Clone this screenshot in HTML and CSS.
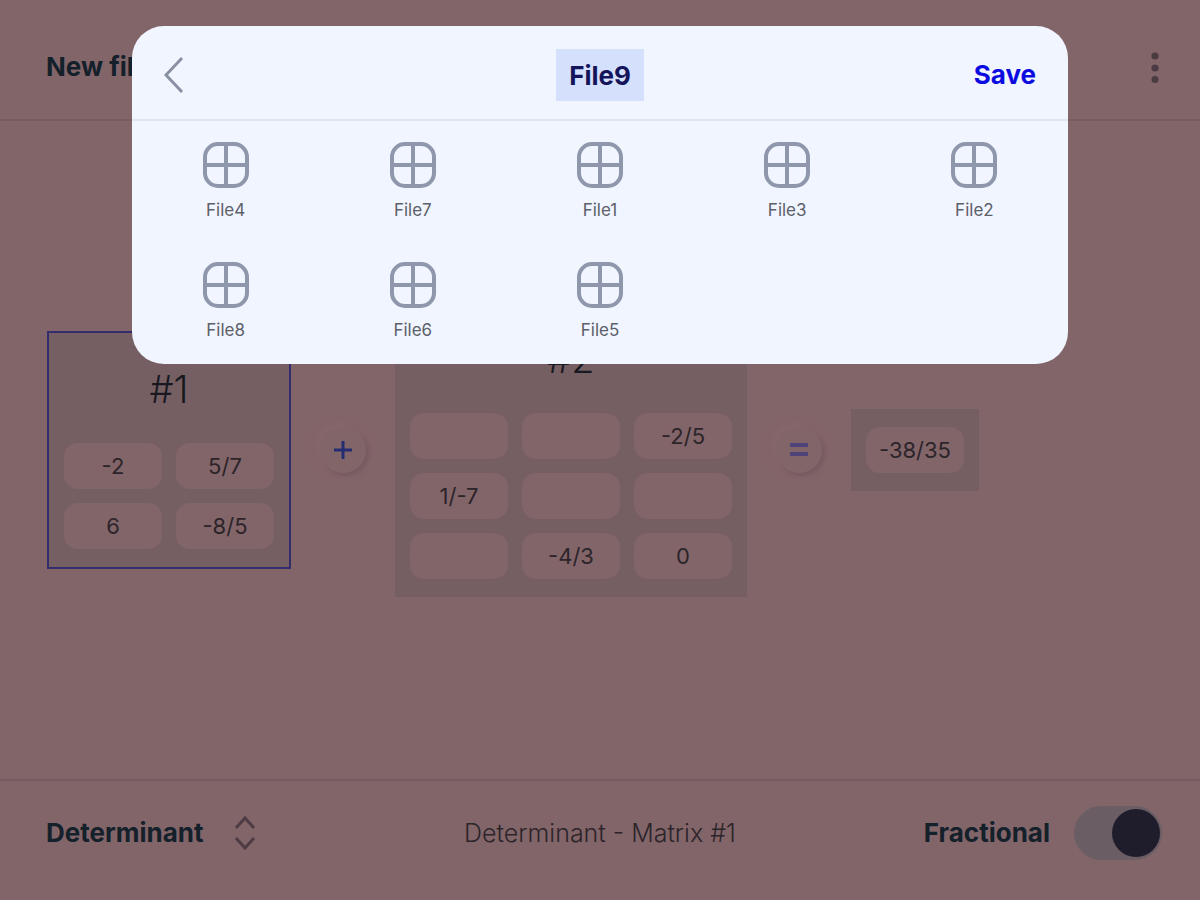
FILE: index.html
```html
<!DOCTYPE html>
<html lang="en">
<head>
<meta charset="utf-8">
<meta name="viewport" content="width=device-width, initial-scale=1">
<title>New file</title>
<link rel="stylesheet" href="styles.css">
</head>
<body>
<svg class="defs" aria-hidden="true">
  <symbol id="matrix-icon" viewBox="0 0 46 46">
    <rect x="2" y="2" width="42" height="42" rx="13"/>
    <path d="M23 2v42M2 23h42"/>
  </symbol>
</svg>
<div class="app">
  <header class="topbar">
    <h1 class="strong">New file</h1>
    <button class="icon-button" aria-label="More options">
      <svg class="dots" width="10" height="32" viewBox="0 0 10 32"><circle cx="5" cy="5" r="3.6"/><circle cx="5" cy="17" r="3.6"/><circle cx="5" cy="28.500" r="3.500"/></svg>
    </button>
  </header>

  <main class="workspace">
    <section class="matrix selected" aria-label="Matrix #1">
      <h2 class="matrix-title">#1</h2>
      <div class="cells two">
        <input class="cell" aria-label="Row 1, column 1" value="-2">
        <input class="cell" aria-label="Row 1, column 2" value="5/7">
        <input class="cell" aria-label="Row 2, column 1" value="6">
        <input class="cell" aria-label="Row 2, column 2" value="-8/5">
      </div>
    </section>
    <div class="operator">
      <button class="knob" aria-label="Add">
        <svg width="18" height="18" viewBox="0 0 18 18"><path d="M9 0v18M0 9h18"/></svg>
      </button>
    </div>
    <section class="matrix" aria-label="Matrix #2">
      <h2 class="matrix-title">#2</h2>
      <div class="cells three">
        <input class="cell" aria-label="Row 1, column 1" value="">
        <input class="cell" aria-label="Row 1, column 2" value="">
        <input class="cell" aria-label="Row 1, column 3" value="-2/5">
        <input class="cell" aria-label="Row 2, column 1" value="1/-7">
        <input class="cell" aria-label="Row 2, column 2" value="">
        <input class="cell" aria-label="Row 2, column 3" value="">
        <input class="cell" aria-label="Row 3, column 1" value="">
        <input class="cell" aria-label="Row 3, column 2" value="-4/3">
        <input class="cell" aria-label="Row 3, column 3" value="0">
      </div>
    </section>
    <div class="operator">
      <button class="knob equals" aria-label="Equals">
        <svg width="18" height="18" viewBox="0 0 18 18"><path d="M0 4h18M0 13h18"/></svg>
      </button>
    </div>
    <section class="matrix" aria-label="Result">
      <output class="cell result">-38/35</output>
    </section>
  </main>

  <footer class="bottombar">
    <div class="picker">
      <select class="strong" aria-label="Operation"><option>Determinant</option></select>
      <svg class="chevrons" width="22" height="34" viewBox="0 0 22 34"><path d="M2 12l9-10 9 10M2 22l9 10 9-10"/></svg>
    </div>
    <p class="status">Determinant - Matrix #1</p>
    <label class="mode strong">Fractional<input class="switch" type="checkbox" role="switch" checked></label>
  </footer>

  <section class="dialog" role="dialog" aria-label="Save file">
    <div class="dialog-bar">
      <button class="icon-button" aria-label="Back">
        <svg class="back" width="22" height="38" viewBox="0 0 22 38"><path d="M18 2L2 19l16 17"/></svg>
      </button>
      <input class="filename" aria-label="File name" value="File9">
      <button class="save">Save</button>
    </div>
    <div class="files">
      <button class="file"><svg class="file-icon"><use href="#matrix-icon"/></svg>File4</button>
      <button class="file"><svg class="file-icon"><use href="#matrix-icon"/></svg>File7</button>
      <button class="file"><svg class="file-icon"><use href="#matrix-icon"/></svg>File1</button>
      <button class="file"><svg class="file-icon"><use href="#matrix-icon"/></svg>File3</button>
      <button class="file"><svg class="file-icon"><use href="#matrix-icon"/></svg>File2</button>
      <button class="file"><svg class="file-icon"><use href="#matrix-icon"/></svg>File8</button>
      <button class="file"><svg class="file-icon"><use href="#matrix-icon"/></svg>File6</button>
      <button class="file"><svg class="file-icon"><use href="#matrix-icon"/></svg>File5</button>
    </div>
  </section>
</div>
</body>
</html>
```
FILE: styles.css
```css
* { box-sizing: border-box; }

body {
  margin: 0;
  font-family: Inter, "Open Sans", sans-serif;
  background: #826569;
  color: #2c2429;
}

h1, h2, p { margin: 0; }

button, input, select {
  margin: 0;
  padding: 0;
  border: 0;
  background: none;
  font: inherit;
  color: inherit;
}

svg {
  display: block;
  fill: none;
}

.defs {
  position: absolute;
  width: 0;
  height: 0;
}

.app {
  position: relative;
  display: flex;
  flex-direction: column;
  min-height: 100vh;
}

.strong {
  font-size: 26px;
  line-height: 32px;
  font-weight: 700;
  color: #14202a;
}

.topbar {
  display: flex;
  align-items: center;
  justify-content: space-between;
  padding: 51px 40px 36px 46px;
  border-bottom: 2px solid #765b60;
}

.icon-button {
  display: flex;
  justify-content: center;
}

.dots { fill: #4b3b43; }

.workspace {
  flex: 1;
  display: flex;
  align-items: center;
  padding: 0 47px;
}

.matrix {
  padding: 18px 15px;
  background: #765f63;
}

.selected { border: 2px solid #342c6c; }

.matrix-title {
  height: 92px;
  padding-top: 14px;
  font-size: 38px;
  line-height: 48px;
  font-weight: 300;
  text-align: center;
  color: #17191f;
}

.cells {
  display: grid;
  gap: 14px;
}

.two { grid-template-columns: repeat(2, 98px); }
.three { grid-template-columns: repeat(3, 98px); }

.cell {
  width: 98px;
  height: 46px;
  border-radius: 14px;
  background: #826569;
  font-size: 22px;
  line-height: 46px;
  text-align: center;
}

.result { display: block; }

.operator {
  flex: 0 0 104px;
  display: flex;
  justify-content: center;
}

.knob {
  display: grid;
  place-items: center;
  width: 46px;
  height: 46px;
  border-radius: 50%;
  box-shadow: 3px 3px 4px #755a5f, -3px -3px 6px #86696c;
  background: #826569;
  stroke: #242d72;
  stroke-width: 3;
}

.equals {
  stroke: #50437a;
  stroke-width: 4;
}

.bottombar {
  display: grid;
  grid-template-columns: 1fr auto 1fr;
  align-items: center;
  padding: 25px 38px 40px;
  border-top: 2px solid #765b60;
}

.picker {
  justify-self: start;
  display: flex;
  align-items: center;
  gap: 30px;
  padding-left: 8px;
}

.picker select { appearance: none; }

.chevrons {
  stroke: #4f3b43;
  stroke-width: 3;
}

.status {
  font-size: 25px;
  line-height: 32px;
  font-weight: 300;
}

.mode {
  justify-self: end;
  display: flex;
  align-items: center;
  gap: 24px;
}

.switch {
  appearance: none;
  display: flex;
  align-items: center;
  justify-content: flex-end;
  width: 88px;
  height: 54px;
  padding: 2px;
  border-radius: 27px;
  background: #6a5d64;
}

.switch::before {
  content: "";
  width: 48px;
  height: 48px;
  border-radius: 50%;
  background: #1f1c2c;
}

.switch:not(:checked) { justify-content: flex-start; }

.dialog {
  position: absolute;
  top: 26px;
  left: 11%;
  right: 11%;
  padding-bottom: 24px;
  border-radius: 32px;
  background: #f1f5ff;
}

.dialog-bar {
  display: grid;
  grid-template-columns: 1fr auto 1fr;
  align-items: center;
  padding: 23px 32px 18px;
  border-bottom: 2px solid #dee6f1;
}

.dialog-bar .icon-button { justify-self: start; }

.back {
  stroke: #8a90a4;
  stroke-width: 3;
}

.filename {
  width: 88px;
  height: 52px;
  background: #d5e0fd;
  font-size: 26px;
  font-weight: 700;
  text-align: center;
  color: #14145a;
}

.save {
  justify-self: end;
  font-size: 26px;
  line-height: 32px;
  font-weight: 700;
  color: #0c0ce0;
}

.files {
  display: grid;
  grid-template-columns: repeat(5, 1fr);
  row-gap: 42px;
  padding-top: 21px;
}

.file {
  display: flex;
  flex-direction: column;
  align-items: center;
  gap: 12px;
  font-size: 17px;
  line-height: 20px;
  color: #5c6069;
}

.file-icon {
  width: 46px;
  height: 46px;
  stroke: #8e97ab;
  stroke-width: 4;
}
```
